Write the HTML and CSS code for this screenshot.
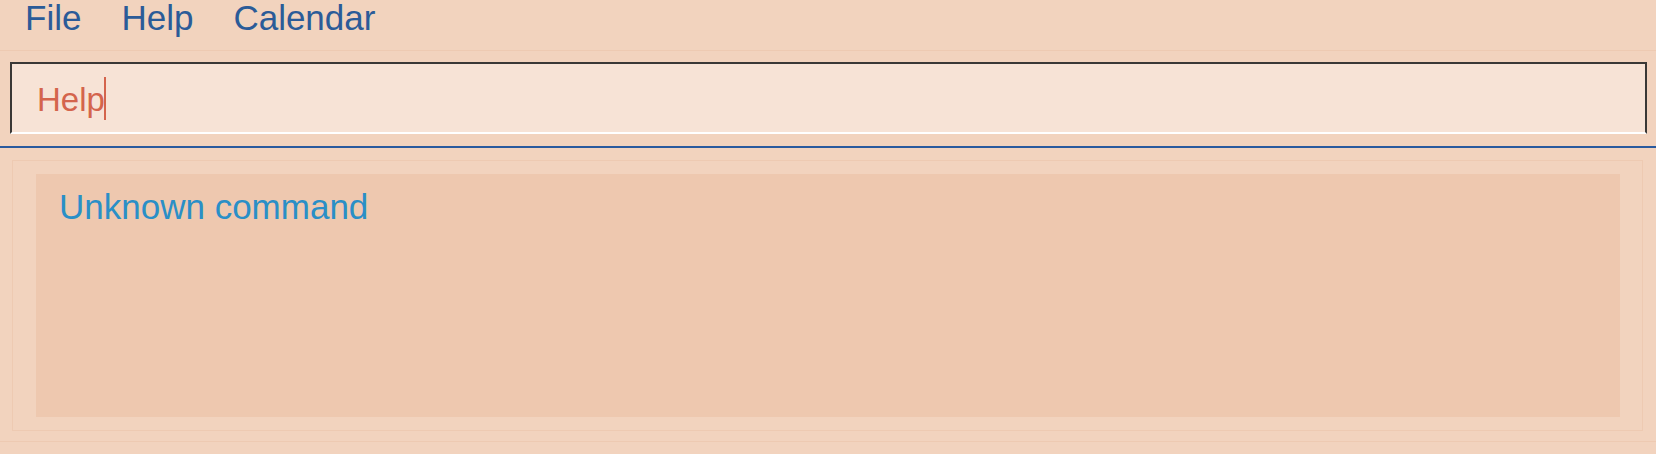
FILE: index.html
```html
<!DOCTYPE html>
<html>
<head>
<meta charset="utf-8">
<link rel="stylesheet" href="styles.css">
</head>
<body>
<div class="menubar">
  <span class="menu-item">File</span>
  <span class="menu-item">Help</span>
  <span class="menu-item">Calendar</span>
</div>
<div class="command-area">
  <div class="command-box">
    <span class="command-text">Help</span><span class="caret"></span>
  </div>
</div>
<div class="result-area">
  <div class="result-outer">
    <div class="result-inner">
      <div class="result-text">Unknown command</div>
    </div>
  </div>
</div>
<div class="status-bar"></div>
</body>
</html>
```
FILE: styles.css
```css
html, body {
  margin: 0;
  padding: 0;
  background: #f2d3be;
  font-family: "Liberation Sans", Arial, sans-serif;
  height: 100%;
  overflow: hidden;
}

.menubar {
  display: flex;
  height: 50px;
  padding-left: 5px;
  border-bottom: 1px solid #eecab2;
}

.menu-item {
  padding: 0 20px;
  font-size: 35px;
  line-height: 36px;
  color: #2b5b98;
}

.command-area {
  padding: 11px 9px 12px 10px;
  border-bottom: 2px solid #2a5a9e;
}

.command-box {
  display: flex;
  align-items: center;
  height: 68px;
  padding-left: 25px;
  background: #f7e3d6;
  border: 2px solid #3a3836;
  border-bottom-color: #ffffff;
}

.command-text {
  font-size: 33px;
  line-height: 40px;
  margin-top: 4px;
  color: #d4644c;
}

.caret {
  display: inline-block;
  width: 2px;
  height: 43px;
  margin-left: -1px;
  background: #d4644c;
}

.result-area {
  padding: 12px 13px 10px 12px;
  border-bottom: 1px solid #eecab2;
}

.result-outer {
  border: 1px solid #eecab2;
  padding: 13px 22px 13px 23px;
}

.result-inner {
  height: 243px;
  background: #eec8af;
  padding: 12px 22px 0 23px;
  box-sizing: border-box;
}

.result-text {
  font-size: 35px;
  line-height: 42px;
  color: #2a8fc7;
}

.status-bar {
  height: 20px;
}
```
